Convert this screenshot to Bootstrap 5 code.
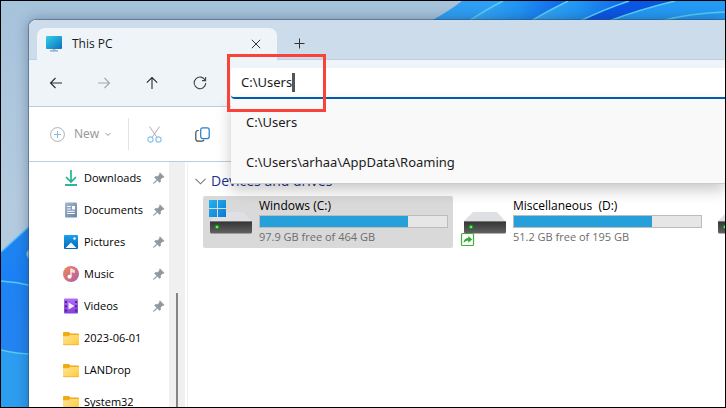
<!DOCTYPE html>
<html lang="en">
<head>
<meta charset="utf-8">
<meta name="viewport" content="width=device-width, initial-scale=1">
<title>This PC</title>
<link href="https://cdn.jsdelivr.net/npm/bootstrap@5.3.0/dist/css/bootstrap.min.css" rel="stylesheet">
<style>
body { font-family: "Open Sans", "Noto Sans", sans-serif; font-size: 12px; line-height: 16px; color: #111; }
svg { display: block; flex: none; }
.desktop { border: 1px solid #000; padding: 19px 0 0 28px; background: #a9c5dd; }
.wallpaper { left: 0; top: 0; }
.explorer { background: #fff; border-radius: 7px 0 0 0; box-shadow: 0 0 14px rgba(20,40,70,.4), 0 0 0 1px rgba(60,80,105,.45); }
.tabstrip { background: #cddceb; height: 40px; padding: 8px 8px 0; border-bottom: 1px solid #c0d0e4; border-radius: 7px 0 0 0; }
.folder-tab { background: #eff4f9; width: 240px; border-radius: 8px 8px 0 0; padding: 0 16px 0 9px; margin-bottom: -1px; }
.tab-name { color: #1b1b1b; padding-left: 10px; }
.plain { border: 0; background: none; padding: 0; color: #222; line-height: 16px; }
.new-tab { margin-left: 17px; }
.navrow { background: #eff4f9; height: 47px; border-bottom: 1px solid #bccddb; }
.nav-buttons { width: 202px; padding: 0 24px 0 20px; }
.address { height: 31px; }
.address-input { height: 31px; border: 0; border-bottom: 2px solid #005fb8; border-radius: 4px 0 0 4px; background: #fff; padding: 0 10px; font-family: "Noto Sans", sans-serif; font-size: 13px; color: #1b1b1b; outline: 0; }
.caret { left: 61px; top: 5px; width: 3px; height: 19px; background: #555; }
.suggestions { left: 0; top: 31px; height: 85px; background: #f9f9f9; border-bottom: 1px solid #ccc; box-shadow: 0 6px 14px rgba(0,0,0,.22); z-index: 3; padding-top: 3px; }
.suggestions a { display: flex; align-items: center; height: 40px; padding-left: 15px; font-family: "Noto Sans", sans-serif; font-size: 13px; color: #1b1b1b; text-decoration: none; }
.callout { left: -4px; top: -14px; width: 99px; height: 58px; border: 3px solid #f8423a; z-index: 4; }
.toolbar { height: 55px; border-bottom: 1px solid #bccddb; padding-left: 21px; }
.new-btn { color: #9a9a9a; gap: 6px; font-family: "Noto Sans", sans-serif; }
.new-btn span { padding-left: 3px; }
.rule { width: 1px; height: 32px; background: #e3e3e3; margin: 0 18px 0 17px; }
.copy { margin-left: 33px; }
.sidebar { width: 140px; font-size: 11px; }
.place { height: 32px; padding: 0 4px 0 34px; color: #000; text-decoration: none; }
.place span { padding-left: 5px; white-space: nowrap; }
.scrollgutter { width: 16px; background: #f0f0f0; padding: 131px 7px 0; }
.thumb { width: 2px; background: #858585; }
.files { border-left: 1px solid #f0f0f0; margin-left: 2px; padding-left: 7px; }
.group-head { height: 34px; padding-top: 4px; gap: 5px; font-size: 14px; line-height: 20px; color: #1e3287; font-weight: 400; margin: 0; }
.drives { gap: 4px; padding-left: 8px; }
.drive { width: 250px; height: 52px; padding: 2px 5px 0 6px; border-radius: 2px; color: #000; text-decoration: none; }
.drive.selected { background: #d9d9d9; }
.drive-text { padding-left: 6px; }
.usage { height: 13px; border: 1px solid #bcbcbc; border-radius: 0; background: #e6e6e6; margin: 1px 0; }
.usage .progress-bar { background: #26a0da; }
.free { color: #6d6d6d; font-size: 11px; }
</style>
<script src="https://cdn.jsdelivr.net/npm/bootstrap@5.3.0/dist/js/bootstrap.bundle.min.js" defer></script>
</head>
<body>
<svg width="0" height="0" class="position-absolute" aria-hidden="true">
  <defs>
    <linearGradient id="gFolder" x1="0" y1="0" x2="1" y2="1"><stop offset="0" stop-color="#ffe59b"/><stop offset="1" stop-color="#ffc937"/></linearGradient>
    <linearGradient id="gDoc" x1="0" y1="0" x2="1" y2="1"><stop offset="0" stop-color="#a5b8cd"/><stop offset="1" stop-color="#6584a5"/></linearGradient>
    <linearGradient id="gPic" x1="0" y1="0" x2="0" y2="1"><stop offset="0" stop-color="#1ba2ea"/><stop offset="1" stop-color="#0565b8"/></linearGradient>
    <linearGradient id="gMusic" x1="0" y1="0" x2="1" y2="1"><stop offset="0" stop-color="#f08a56"/><stop offset="1" stop-color="#b25ca8"/></linearGradient>
    <linearGradient id="gVideo" x1="0" y1="0" x2="0" y2="1"><stop offset="0" stop-color="#b070f4"/><stop offset="1" stop-color="#8040d8"/></linearGradient>
    <linearGradient id="gScreen" x1="0" y1="0" x2="1" y2="1"><stop offset="0" stop-color="#35d0e6"/><stop offset="1" stop-color="#0c6fc4"/></linearGradient>
    <linearGradient id="gDisk" x1="0" y1="0" x2="0" y2="1"><stop offset="0" stop-color="#333"/><stop offset="1" stop-color="#626262"/></linearGradient>
    <linearGradient id="gWin" x1="0" y1="0" x2="1" y2="1"><stop offset="0" stop-color="#25b4ee"/><stop offset="1" stop-color="#0a78d4"/></linearGradient>
    <linearGradient id="gSky" x1="0" y1="0" x2="0" y2="1"><stop offset="0" stop-color="#a6c3dc"/><stop offset=".5" stop-color="#b4cbdf"/></linearGradient>
    <linearGradient id="gPetal" x1="0" y1="0" x2="0" y2="1"><stop offset="0" stop-color="#2186ee"/><stop offset=".3" stop-color="#1b80f5"/></linearGradient>
    <linearGradient id="gPetalMid" x1="0" y1="0" x2="0" y2="1"><stop offset="0" stop-color="#1f83f5"/><stop offset="1" stop-color="#2484f0"/></linearGradient>
    <linearGradient id="gLeaf" x1="0" y1="0" x2="1" y2="0"><stop offset="0" stop-color="#38abf5"/><stop offset=".5" stop-color="#2193f3"/><stop offset="1" stop-color="#0d62ea"/></linearGradient>
    <symbol id="folder" viewBox="0 0 16 16"><path d="M0 3a1 1 0 0 1 1-1h5l1.500 1.500H15a1 1 0 0 1 1 1V9H0z" fill="#f2ab12"/><path d="M0 6.300h5.500L7 5h9v9a1 1 0 0 1-1 1H1a1 1 0 0 1-1-1z" fill="url(#gFolder)"/><path d="M0 13.700a1 1 0 0 0 1 1h14a1 1 0 0 0 1-1" fill="none" stroke="#eeb02a" stroke-width=".7"/></symbol>
    <symbol id="pin" viewBox="0 0 12 12"><path d="M7 .8 11.200 5 10 5.600 9.300 5.500 7.500 7.500 7.600 9.700 6.700 10.500 4.300 8.200 1.200 11.200.6 11.400.8 10.700 3.800 7.700 1.500 5.300 2.300 4.500 4.500 4.600 6.500 2.700 6.400 1.900z" fill="#8f99a3" stroke="#8f99a3" stroke-width=".6"/></symbol>
    <symbol id="disk" viewBox="0 0 44 46"><path d="M10 14h24l8 9H1z" fill="#dfe0e4"/><path d="M1 23h42v11a1.500 1.500 0 0 1-1.500 1.500h-39A1.500 1.500 0 0 1 1 34z" fill="url(#gDisk)"/><path d="M1 23.500h42" stroke="#777"/><circle cx="8" cy="29" r="2.400" fill="#178a22"/><circle cx="8" cy="29" r="1.300" fill="#5bf45a"/></symbol>
  </defs>
</svg>

<div class="desktop vh-100 position-relative overflow-hidden d-flex flex-column">
  <svg class="wallpaper position-absolute w-100 h-100" viewBox="0 0 724 406" preserveAspectRatio="xMinYMin slice" aria-hidden="true">
    <rect width="724" height="406" fill="url(#gSky)"/>
    <path d="M0 251C10 242 20 233 32 222V406H0z" fill="url(#gPetal)"/>
    <path d="M0 251C10 242 20 233 32 222" fill="none" stroke="#54bdf8" stroke-width="1.500"/>
    <path d="M0 280q16 1 32 5v70q-16-1-32-5z" fill="url(#gPetalMid)"/>
    <path d="M0 349q16 4 32 4v53H0z" fill="#2d9df0"/>
    <path d="M0 280q16 1 32 5M0 349q16 4 32 4" fill="none" stroke="#58c9f8" stroke-width="1.300"/>
    <path d="M30 247q-8 5-2 11h4v-11z" fill="#8fd0e8"/>
    <path d="M430 20Q448 10 461 0H724V20z" fill="#2f9ff3"/>
    <path d="M468 20Q486 8 502 0H567Q548 9 530 20z" fill="url(#gLeaf)"/>
    <path d="M530 20Q548 9 567 0H628Q604 8 579 20z" fill="url(#gLeaf)"/>
    <path d="M579 20Q604 8 628 0H674Q640 8 608 20z" fill="#0b56e4"/>
    <path d="M608 20Q640 8 674 0H724V20z" fill="#249af4"/>
    <path d="M468 20Q486 8 502 0M530 20Q548 9 567 0M579 20Q604 8 628 0M608 20Q640 8 674 0M660 20Q690 12 724 11" fill="none" stroke="#5bcdf6" stroke-width="1.500"/>
  </svg>

  <main class="explorer position-relative flex-grow-1 d-flex flex-column">
    <header class="tabstrip d-flex flex-shrink-0">
      <div class="folder-tab d-flex align-items-center">
        <svg width="16" height="16" viewBox="0 0 16 16"><rect width="16" height="13" rx="1" fill="url(#gScreen)"/><path d="M6.500 13h3v1.500h-3z" fill="#b7bcc4"/><path d="M4 14.300h8v1.200H4z" fill="#8f98a3"/></svg>
        <span class="tab-name flex-grow-1">This PC</span>
        <button class="plain" aria-label="Close tab"><svg width="10" height="10" viewBox="0 0 10 10" stroke="#333"><path d="M.8.8l8.400 8.400M9.200.8.8 9.200"/></svg></button>
      </div>
      <button class="plain new-tab" aria-label="New tab"><svg width="11" height="11" viewBox="0 0 11 11" stroke="#333"><path d="M5.500.5v10M.5 5.500h10"/></svg></button>
    </header>

    <div class="navrow d-flex align-items-center flex-shrink-0">
      <div class="nav-buttons d-flex justify-content-between align-items-center flex-shrink-0">
        <button class="plain" aria-label="Back"><svg width="14" height="14" viewBox="0 0 14 14" fill="none" stroke="#2b2b2b" stroke-width="1.100"><path d="M13 7H1.500M6.500 2 1.500 7l5 5"/></svg></button>
        <button class="plain" aria-label="Forward" disabled><svg width="14" height="14" viewBox="0 0 14 14" fill="none" stroke="#a3a7ab" stroke-width="1.100"><path d="M1 7h11.500M7.500 2l5 5-5 5"/></svg></button>
        <button class="plain" aria-label="Up"><svg width="14" height="14" viewBox="0 0 14 14" fill="none" stroke="#2b2b2b" stroke-width="1.100"><path d="M7 13V1.500M1.800 6.700 7 1.500l5.200 5.200"/></svg></button>
        <button class="plain" aria-label="Refresh"><svg width="14" height="14" viewBox="0 0 14 14" fill="none" stroke="#444" stroke-width="1.100"><path d="M12.300 4.500A5.800 5.800 0 1 0 12.800 7M12.600 1v3.600H9"/></svg></button>
      </div>
      <div class="address position-relative flex-grow-1">
        <input class="address-input w-100" type="text" value="C:\Users" aria-label="Address">
        <i class="caret position-absolute"></i>
        <nav class="suggestions position-absolute w-100" aria-label="Suggestions">
          <a href="#">C:\Users</a>
          <a href="#">C:\Users\arhaa\AppData\Roaming</a>
        </nav>
        <div class="callout position-absolute"></div>
      </div>
    </div>

    <div class="toolbar d-flex align-items-center flex-shrink-0">
      <button class="plain new-btn d-flex align-items-center">
        <svg width="15" height="15" viewBox="0 0 15 15" fill="none"><circle cx="7.500" cy="7.500" r="6.900" stroke="#b0b0b0"/><path d="M7.500 4v7M4 7.500h7" stroke="#86bde6" stroke-width="1.100"/></svg>
        <span>New</span>
        <svg width="6" height="5" viewBox="0 0 6 5" fill="none" stroke="#999"><path d="M.5 1 3 3.500 5.500 1"/></svg>
      </button>
      <span class="rule"></span>
      <button class="plain" aria-label="Cut" disabled><svg width="15" height="17" viewBox="0 0 15 17" fill="none"><path d="M2.500.5 10 11.500M12.500.5 5 11.500" stroke="#adadad"/><circle cx="3.500" cy="13.500" r="2.600" stroke="#8ec5ec" stroke-width="1.200"/><circle cx="11.500" cy="13.500" r="2.600" stroke="#8ec5ec" stroke-width="1.200"/></svg></button>
      <button class="plain copy" aria-label="Copy"><svg width="15" height="15" viewBox="0 0 15 15" fill="none" stroke-width="1.200"><path d="M3.800 3.500H3A2.200 2.200 0 0 0 .8 5.700v6A2.500 2.500 0 0 0 3.300 14.200H7a2.200 2.200 0 0 0 2-1.400" stroke="#4a4a4a"/><rect x="5.700" y=".8" width="8.500" height="10.800" rx="2" stroke="#1f7fd0"/></svg></button>
    </div>

    <div class="d-flex flex-grow-1 overflow-hidden">
      <nav class="sidebar flex-shrink-0" aria-label="Quick access">
        <a class="place d-flex align-items-center" href="#"><svg width="16" height="16" viewBox="0 0 16 16" fill="none" stroke-width="1.700"><path d="M8 0v12M3 7l5 5 5-5" stroke="#22b58c"/><path d="M2 15h12" stroke="#12a293"/></svg><span class="flex-grow-1">Downloads</span><svg width="12" height="12"><use href="#pin"/></svg></a>
        <a class="place d-flex align-items-center" href="#"><svg width="16" height="16" viewBox="0 0 16 16"><rect x="2" y=".5" width="12" height="15" rx="1.200" fill="url(#gDoc)"/><path d="M4.200 4.500h3.600M4.200 7h3.600M4.200 9.300h7.600M4.200 11.500h7.600" stroke="#fff"/><path d="M9 4h3v3.500H9z" fill="#fff"/></svg><span class="flex-grow-1">Documents</span><svg width="12" height="12"><use href="#pin"/></svg></a>
        <a class="place d-flex align-items-center" href="#"><svg width="16" height="16" viewBox="0 0 16 16"><rect x="1" y="1" width="14" height="14" rx="1" fill="url(#gPic)"/><path d="M2.500 14 8 8.500 13.500 14z" fill="#f4faff"/><circle cx="11.500" cy="4.500" r="1.200" fill="#fff"/></svg><span class="flex-grow-1">Pictures</span><svg width="12" height="12"><use href="#pin"/></svg></a>
        <a class="place d-flex align-items-center" href="#"><svg width="16" height="16" viewBox="0 0 16 16"><circle cx="8" cy="8" r="8" fill="url(#gMusic)"/><circle cx="6.500" cy="10.700" r="2" fill="#fff"/><path d="M8 10.700V3.200l3 1.200v1.800L8.700 5.500" fill="none" stroke="#fff" stroke-width="1.200"/></svg><span class="flex-grow-1">Music</span><svg width="12" height="12"><use href="#pin"/></svg></a>
        <a class="place d-flex align-items-center" href="#"><svg width="16" height="16" viewBox="0 0 16 16"><rect x="1" y=".5" width="14" height="15" rx="1" fill="url(#gVideo)"/><path d="M3 3v11M13 3v11" stroke="#3b1a73" stroke-width="1.600" stroke-dasharray="2 2.200"/><path d="M5.500 4.500v7L11.500 8z" fill="#f3eafd"/></svg><span class="flex-grow-1">Videos</span><svg width="12" height="12"><use href="#pin"/></svg></a>
        <a class="place d-flex align-items-center" href="#"><svg width="16" height="16"><use href="#folder"/></svg><span>2023-06-01</span></a>
        <a class="place d-flex align-items-center" href="#"><svg width="16" height="16"><use href="#folder"/></svg><span>LANDrop</span></a>
        <a class="place d-flex align-items-center" href="#"><svg width="16" height="16"><use href="#folder"/></svg><span>System32</span></a>
      </nav>
      <div class="scrollgutter flex-shrink-0 d-flex"><div class="thumb"></div></div>
      <section class="files flex-grow-1 overflow-hidden">
        <h2 class="group-head d-flex align-items-center"><svg width="11" height="7" viewBox="0 0 11 7" fill="none" stroke="#7b7b7b" stroke-width="1.100"><path d="M.5.8l5 5 5-5"/></svg>Devices and drives</h2>
        <div class="drives d-flex">
          <a class="drive selected d-flex flex-shrink-0" href="#">
            <svg width="44" height="46" viewBox="0 0 44 46"><use href="#disk"/><path d="M0 2h8v8H0zM9 2h8v8H9zM0 11h8v8H0zM9 11h8v8H9z" fill="url(#gWin)"/></svg>
            <div class="drive-text flex-grow-1"><div>Windows (C:)</div><div class="progress usage"><div class="progress-bar" style="width:79%"></div></div><div class="free">97.9 GB free of 464 GB</div></div>
          </a>
          <a class="drive d-flex flex-shrink-0" href="#">
            <svg class="overflow-visible" width="44" height="46" viewBox="0 0 44 46"><use href="#disk"/><rect x="-1.500" y="35.500" width="12" height="12" rx="1" fill="#fff" stroke="#3fae3a" stroke-width="1.200"/><path d="M.5 45c.3-3.500 2-5 4.800-5v-2l4 3.400-4 3.400v-2C3.500 42.800 2 43.300.5 45z" fill="#35ad35"/></svg>
            <div class="drive-text flex-grow-1"><div>Miscellaneous&nbsp; (D:)</div><div class="progress usage"><div class="progress-bar" style="width:74%"></div></div><div class="free">51.2 GB free of 195 GB</div></div>
          </a>
          <a class="drive d-flex flex-shrink-0" href="#" aria-label="Drive">
            <svg width="44" height="46"><use href="#disk"/></svg>
          </a>
        </div>
      </section>
    </div>
  </main>
</div>
</body>
</html>
